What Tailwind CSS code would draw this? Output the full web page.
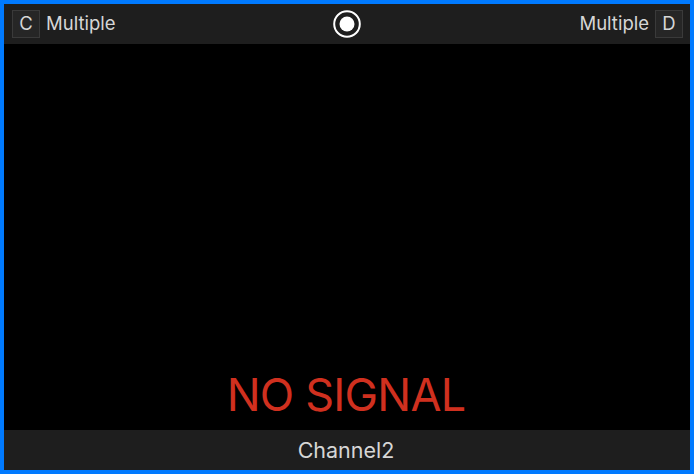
<!DOCTYPE html>
<html lang="en">
<head>
  <meta charset="UTF-8">
  <title>Channel2</title>
  <script src="https://cdn.jsdelivr.net/npm/@tailwindcss/browser@4"></script>
</head>
<body class="bg-black">
  <div class="w-[694px] h-[474px] border-4 border-[#007aff] bg-black flex flex-col overflow-hidden font-['Inter','Liberation_Sans',sans-serif] text-[#d6d6d6]">
    <!-- Top bar -->
    <div class="h-10 bg-[#1e1e1e] flex items-center justify-between pl-2 pr-[7px] shrink-0">
      <div class="flex items-center gap-1.5 w-[159px]">
        <span class="w-7 h-7 border border-[#3a3a3a] bg-[#262626] flex items-center justify-center text-[18.5px]">C</span>
        <span class="text-[18.5px]">Multiple</span>
      </div>
      <svg class="w-7 h-7" viewBox="0 0 28 28">
        <circle cx="14" cy="14" r="12.8" fill="none" stroke="#fff" stroke-width="2"/>
        <circle cx="14" cy="14" r="7.5" fill="#fff"/>
      </svg>
      <div class="flex items-center justify-end gap-1.5 w-40">
        <span class="text-[18.5px]">Multiple</span>
        <span class="w-7 h-7 border border-[#3a3a3a] bg-[#262626] flex items-center justify-center text-[18.5px]">D</span>
      </div>
    </div>
    <!-- Video area -->
    <div class="flex-1 flex items-end justify-center pr-[2px]">
      <span class="text-[45px] leading-[53px] mb-[9px] tracking-[-0.8px] text-[#d0301f]">NO SIGNAL</span>
    </div>
    <!-- Bottom bar -->
    <div class="h-10 bg-[#1e1e1e] flex items-center justify-center pr-[2px] text-[21.5px] shrink-0">Channel2</div>
  </div>
</body>
</html>
